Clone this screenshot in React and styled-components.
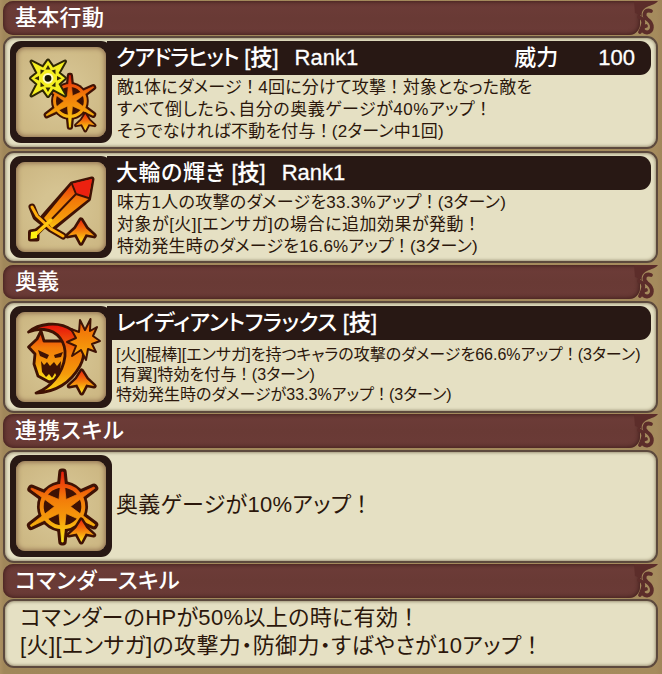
import React from 'react'
import styled, { createGlobalStyle } from 'styled-components'

const GlobalStyle = createGlobalStyle`
  * {
    box-sizing: border-box;
  }
  body {
    margin: 0;
    background: #a58b5d;
    font-family: "Liberation Sans", "Noto Sans CJK JP", sans-serif;
    font-feature-settings: "palt";
  }
`

const Page = styled.main`
  width: 662px;
  height: 674px;
  padding: 1px 4px 0 3px;
  overflow: hidden;
  background: linear-gradient(90deg, #ab9062, #a0875a 4px, #a58b5d 656px, #a1855a);
`

const Header = styled.header`
  display: flex;
  justify-content: space-between;
  height: 34px;
  margin-top: ${props => props.$gap || 0}px;

  svg {
    display: block;
    flex: none;
    margin-left: -18px;
  }
`

const HeaderBar = styled.h2`
  flex: 1;
  margin: 0;
  padding-left: 12px;
  border-radius: 10px 0 11px 10px;
  background: linear-gradient(#6d3c38, #693a35 50%, #6b3b37);
  box-shadow: inset 0 0 4px 1px #43201d;
  color: #fff;
  font-size: 22px;
  font-weight: 500;
  line-height: 33px;
  letter-spacing: ${props => props.$spacing || 0}px;
  white-space: pre;
`

const Card = styled.section`
  display: flex;
  height: ${props => props.$height}px;
  margin-top: ${props => props.$gap || 2}px;
  padding: 3px 5px 0;
  border: 2px solid #5c493d;
  border-radius: 11px;
  background: #e5e0c3;
  box-shadow: inset 0 0 3px 1px #a09679;
`

const IconFrame = styled.div`
  flex: none;
  width: 102px;
  height: 102px;
  padding: 6px;
  border-radius: 11px;
  background: #281814;
`

const IconTile = styled.div`
  width: 90px;
  height: 90px;
  border-radius: 9px;
  background: radial-gradient(#d5c391 30%, #cdb884 80%);
  box-shadow: inset 0 0 5px 1px #8c6b4c;

  svg {
    display: block;
  }
`

const Details = styled.div`
  flex: 1;
  min-width: 0;
`

const Title = styled.h3`
  display: flex;
  height: 34px;
  margin: 0;
  padding: 0 16px 0 4px;
  border-radius: 0 11px 11px 0;
  background: #281814;
  box-shadow: -5px 0 0 #281814;
  color: #fff;
  font-size: 22px;
  font-weight: 500;
  line-height: 34px;
  white-space: pre;
`

const Name = styled.span`
  letter-spacing: ${props => props.$spacing || 0}px;
`

const Tag = styled.span`
  margin-left: 6px;
  -webkit-text-stroke: 0.3px #fff;
`

const Rank = styled.span`
  margin-left: 16px;
  -webkit-text-stroke: 0.3px #fff;
`

const PowerLabel = styled.span`
  margin: 0 40px 0 auto;
`

const Power = styled.span`
  -webkit-text-stroke: 0.3px #fff;
`

const Body = styled.div`
  padding: ${props => props.$pad || '2px 0 0 5px'};
  color: #2b170b;
  font-size: ${props => props.$size || 17}px;
  line-height: ${props => props.$line || 22}px;
`

const LineBox = styled.div`
  letter-spacing: ${props => props.$spacing || 0}px;
  white-space: pre;
`

const Bang = styled.span`
  padding: 0 0.22em;
`

// the full-width exclamation mark keeps some air on both sides
const Line = ({ children, spacing }) => (
  <LineBox $spacing={spacing}>
    {children.split(/(！)/).map((part, i) => (part === '！' ? <Bang key={i}>！</Bang> : part))}
  </LineBox>
)

const DARK = '#3f1204'

const Fire = ({ id, top = 8, bottom = 84 }) => (
  <defs>
    <linearGradient id={id} gradientUnits="userSpaceOnUse" x1="0" x2="0" y1={top} y2={bottom}>
      <stop offset="0" stopColor="#e8140c" />
      <stop offset=".38" stopColor="#f27a09" />
      <stop offset=".65" stopColor="#f59a0b" />
      <stop offset="1" stopColor="#fff21a" />
    </linearGradient>
  </defs>
)

const Arrow = ({ x = 65.3, y = 59, scale = 1 }) => (
  <g transform={`translate(${x} ${y}) scale(${scale})`}>
    <path
      d="M0 0L5 8L12.500 15L4.500 13.500L0 22L-4.500 13.500L-12.500 15L-5 8Z"
      fill="url(#arrow)"
      stroke={DARK}
      strokeWidth="5"
      strokeLinejoin="round"
      paintOrder="stroke"
    />
  </g>
)

const ArrowFire = () => (
  <defs>
    <linearGradient id="arrow" gradientUnits="userSpaceOnUse" x1="0" x2="0" y1="0" y2="22">
      <stop offset="0" stopColor="#ee2a0c" />
      <stop offset=".45" stopColor="#f47b0a" />
      <stop offset="1" stopColor="#ffe21a" />
    </linearGradient>
  </defs>
)

const WHEEL = 'M45.8 11H47.200L50 38.500L78 26L78.800 27.200L54.500 45.500L78.800 63.600L78 65L50 52.500L47.200 81H45.800L43 52.500L15 65.600L14.300 64.200L38.500 45.500L14.800 28.200L15.500 27L43 38.500Z'

const Wheel = ({ fire }) => (
  <g strokeLinejoin="round">
    <circle cx="46.5" cy="45.5" r="25.5" fill={DARK} />
    <path d={WHEEL} fill={DARK} stroke={DARK} strokeWidth="7" />
    <circle cx="46.5" cy="45.5" r="20.8" fill="none" stroke={`url(#${fire})`} strokeWidth="4" />
    <path d={WHEEL} fill={`url(#${fire})`} stroke={`url(#${fire})`} strokeWidth=".8" />
  </g>
)

const QuadraIcon = () => (
  <svg width="90" height="90" viewBox="0 0 90 90">
    <ArrowFire />
    <Fire id="fire-quadra" />
    <g transform="translate(19.5 20.3) scale(.74)">
      <Wheel fire="fire-quadra" />
    </g>
    <Arrow x={69.3} y={67} scale={0.75} />
    <g strokeLinejoin="round">
      <path
        d="M15.5 14.5L27 20.5L32 13.5L37 20.5L49 14.5L42.5 26L49 31.3L42.5 37L49 48.5L37 42L32 49L27 42L15.5 48.5L21.5 37L15 31.3L21.5 26Z"
        fill="#f5ee20"
        stroke="#2e2605"
        strokeWidth="4"
        paintOrder="stroke"
      />
      <path
        d="M32 18L34.5 22.500H29.5ZM32 45L34.5 40.500H29.5ZM18.5 31.3L23 29V33.600ZM45.5 31.3L41 29V33.600ZM24.500 22.5L28.500 23.500L24.500 27.5ZM39.500 22.5L39.500 27.5L35.500 23.500ZM24.500 40L24.500 35L28.500 39ZM39.500 40L35.500 39L39.500 35Z"
        fill="#352c06"
      />
      <circle cx="32" cy="31.3" r="4.4" fill="#151203" stroke="#fffbc0" strokeWidth="2" />
    </g>
  </svg>
)

const SwordIcon = () => (
  <svg width="90" height="90" viewBox="0 0 90 90">
    <Fire id="fire-sword" top={14} bottom={78} />
    <g strokeLinejoin="round" strokeLinecap="round">
      <g fill={DARK} stroke={DARK} strokeWidth="5">
        <path d="M76 17L72.5 37L36 67L27 55L56 22Z" />
        <path d="M16 45L20 55L35 67L47 74" fill="none" strokeWidth="7" />
        <path d="M31 61L21 71L21 77H14.500V70L20 69Z" />
      </g>
      <path d="M76 17L72.5 37L36 66L28 56L56 22Z" fill="url(#fire-sword)" />
      <path d="M57 21.500L76 17L72.500 35L60.500 32Z" fill="#ec2110" />
      <path d="M56 22L60 32L72.500 36M60 32L32 61" fill="none" stroke={DARK} strokeWidth="2" />
      <path d="M16 45L21 54L35 67L47 74" fill="none" stroke="#ffae0d" strokeWidth="3" />
      <path d="M35 58L20 72" fill="none" stroke="#ffc810" strokeWidth="3.500" />
      <path d="M15 70L21 69L21 76L14.500 77Z" fill="#fff012" />
    </g>
    <Arrow x={65} y={58} scale={1.05} />
  </svg>
)

const MaskIcon = () => (
  <svg width="90" height="90" viewBox="0 0 90 90">
    <Fire id="fire-mask" top={13} bottom={72} />
    <Fire id="fire-moon" top={13} bottom={88} />
    <Fire id="fire-burst" top={-6} bottom={62} />
    <Arrow x={65.7} y={59} />
    <g strokeLinejoin="round" stroke={DARK} strokeWidth="2.8">
      <path
        d="M25 19L21 27L12.500 35L19 42L18 52L22 64L33 70L42 67L52 50V29L28 29Z"
        fill="url(#fire-mask)"
      />
      <path
        d="M12.500 20C22 12 42 8 56 18C69 27 70 43 64 54C55 70 41 80 20 81C34 76 47 62 49 44C50 30 42 19 28 17.500C22 17 17 18 12.500 20Z"
        fill="url(#fire-moon)"
      />
      <path
        d="M74.500 7L74 19L81 15L77 24L84 29L76 32L80 40L72 37L70 48L65 38L56 44L60 34L51 30L60 26L55 17L63 20L64 8L69 18Z"
        fill="url(#fire-burst)"
        strokeWidth="2"
      />
    </g>
    <path d="M22 38L33 43L31 47L24 44ZM38 43L47 40L45 45L39 46Z" fill={DARK} />
    <path d="M25 49L28 53L31 50L34 54L38 50L41 54L45 49L44 62L41 65L39 61L36 66L33 62L30 65L26 60Z" fill={DARK} />
  </svg>
)

const WheelIcon = () => (
  <svg width="90" height="90" viewBox="0 0 90 90">
    <Fire id="fire-wheel" />
    <Wheel fire="fire-wheel" />
    <Arrow />
  </svg>
)

const Flourish = () => (
  <svg width="36" height="34" viewBox="0 0 36 34">
    <path d="M12 0H36C34 3 29 4 25 6C21 8 19 11 20 15L13 12Z" fill="#5c2d2a" />
    <path
      d="M29 10C23 8 20 14 25 18C32 23 31 31 25 31.500C20 31 19 26 24 25M17 16C23 18 22 23 18 31"
      fill="none"
      stroke="#5c2d2a"
      strokeWidth="3.8"
      strokeLinecap="round"
    />
  </svg>
)

const SectionHeader = ({ children, gap, spacing }) => (
  <Header $gap={gap}>
    <HeaderBar $spacing={spacing}>{children}</HeaderBar>
    <Flourish />
  </Header>
)

const SkillIcon = ({ children }) => (
  <IconFrame>
    <IconTile>{children}</IconTile>
  </IconFrame>
)

const App = () => (
  <Page>
    <GlobalStyle />

    <SectionHeader spacing={0.3}>基本行動</SectionHeader>
    <Card $height={113} $gap={1}>
      <SkillIcon><QuadraIcon /></SkillIcon>
      <Details>
        <Title>
          <Name $spacing={-1.2}>クアドラヒット</Name>
          <Tag>[技]</Tag>
          <Rank>Rank1</Rank>
          <PowerLabel>威力</PowerLabel>
          <Power>100</Power>
        </Title>
        <Body>
          <Line spacing={0.27}>敵1体にダメージ！4回に分けて攻撃！対象となった敵を</Line>
          <Line spacing={0.5}>すべて倒したら、自分の奥義ゲージが40%アップ！</Line>
          <Line spacing={0.2}>そうでなければ不動を付与！(2ターン中1回)</Line>
        </Body>
      </Details>
    </Card>
    <Card $height={112}>
      <SkillIcon><SwordIcon /></SkillIcon>
      <Details>
        <Title>
          <Name $spacing={0.6}>大輪の輝き</Name>
          <Tag>[技]</Tag>
          <Rank>Rank1</Rank>
        </Title>
        <Body>
          <Line spacing={0.27}>味方1人の攻撃のダメージを33.3%アップ！(3ターン)</Line>
          <Line spacing={0.5}>対象が[火][エンサガ]の場合に追加効果が発動！</Line>
          <Line spacing={0.2}>特効発生時のダメージを16.6%アップ！(3ターン)</Line>
        </Body>
      </Details>
    </Card>

    <SectionHeader gap={2}>奥義</SectionHeader>
    <Card $height={112}>
      <SkillIcon><MaskIcon /></SkillIcon>
      <Details>
        <Title>
          <Name $spacing={-0.3}>レイディアントフラックス</Name>
          <Tag>[技]</Tag>
        </Title>
        <Body $size={16} $line={20} $pad="5px 0 0 4px">
          <Line>[火][棍棒][エンサガ]を持つキャラの攻撃のダメージを66.6%アップ！(3ターン)</Line>
          <Line spacing={0.1}>[有翼]特効を付与！(3ターン)</Line>
          <Line>特効発生時のダメージが33.3%アップ！(3ターン)</Line>
        </Body>
      </Details>
    </Card>

    <SectionHeader gap={1} spacing={1}>連携スキル</SectionHeader>
    <Card $height={113}>
      <SkillIcon><WheelIcon /></SkillIcon>
      <Body $size={22} $line={100} $pad="0 0 0 4px">
        <Line spacing={0.3}>奥義ゲージが10%アップ！</Line>
      </Body>
    </Card>

    <SectionHeader gap={1} spacing={0.4}>コマンダースキル</SectionHeader>
    <Card $height={69} $gap={1}>
      <Body $size={22} $line={28} $pad="0 0 0 10px">
        <Line spacing={0.35}>コマンダーのHPが50%以上の時に有効！</Line>
        <Line spacing={0.4}>[火][エンサガ]の攻撃力・防御力・すばやさが10アップ！</Line>
      </Body>
    </Card>
  </Page>
)

export default App
